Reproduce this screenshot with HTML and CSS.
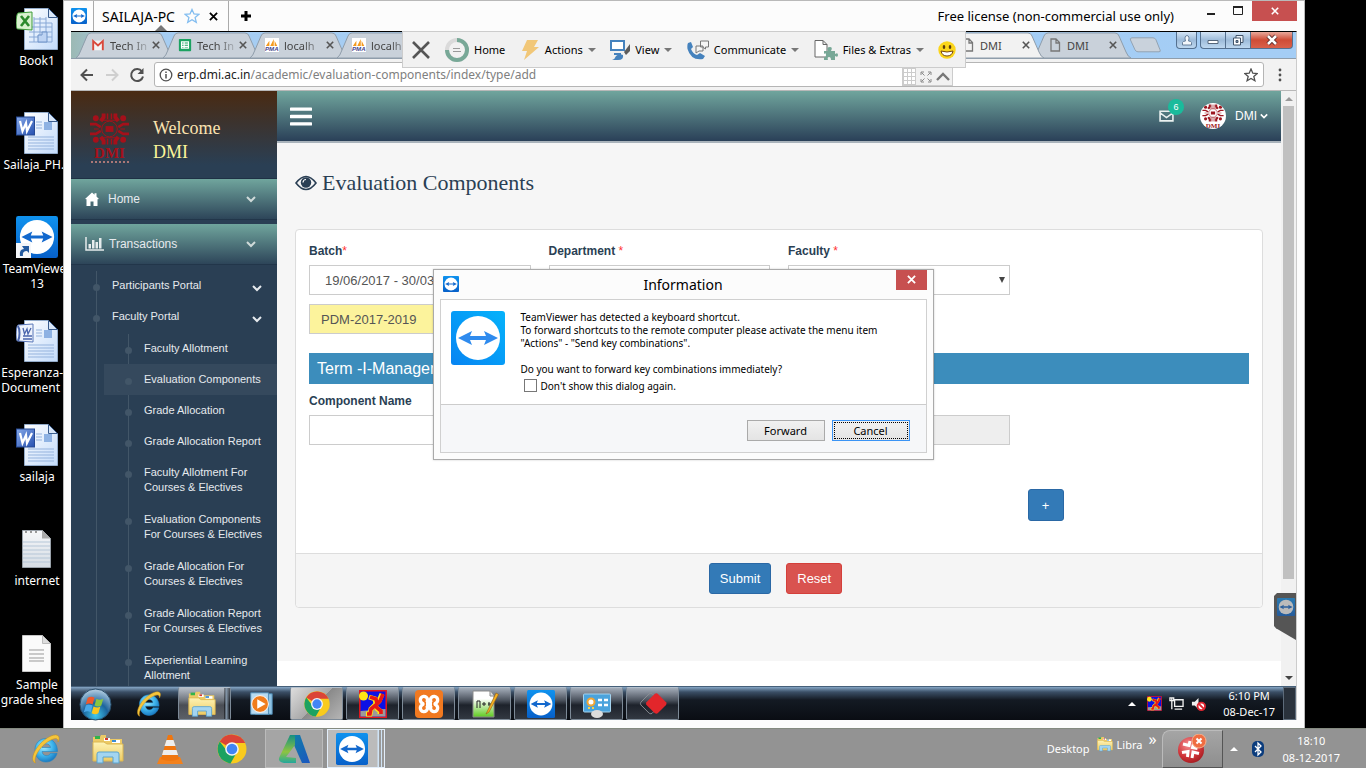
FILE: index.html
```html
<!DOCTYPE html>
<html lang="en">
<head>
<meta charset="utf-8">
<title>SAILAJA-PC - TeamViewer</title>
<link rel="stylesheet" href="styles.css">
</head>
<body>
<svg class="defs" aria-hidden="true">
  <defs>
    <linearGradient id="gTv" x1="0" y1="0" x2="0" y2="1"><stop offset="0" stop-color="#0f92ee"/><stop offset="1" stop-color="#0760c9"/></linearGradient>
    <linearGradient id="gTvBright" x1="1" y1="0" x2="0" y2="1"><stop offset="0" stop-color="#05b3fb"/><stop offset="1" stop-color="#0784f2"/></linearGradient>
    <linearGradient id="gPage" x1="0" y1="0" x2="1" y2="1"><stop offset="0" stop-color="#fff"/><stop offset="1" stop-color="#c3dbfa"/></linearGradient>
    <linearGradient id="gNote" x1="0" y1="0" x2="0" y2="1"><stop offset="0" stop-color="#f6f7f9"/><stop offset="1" stop-color="#d5dce4"/></linearGradient>
    <linearGradient id="gWord" x1="0" y1="0" x2="1" y2="1"><stop offset="0" stop-color="#86a9e8"/><stop offset="1" stop-color="#2650b0"/></linearGradient>
    <linearGradient id="gFolder" x1="0" y1="0" x2="0" y2="1"><stop offset="0" stop-color="#fdf3b5"/><stop offset="1" stop-color="#eecb62"/></linearGradient>
    <radialGradient id="gIe" cx=".4" cy=".35" r=".7"><stop offset="0" stop-color="#a5ecff"/><stop offset=".55" stop-color="#3fb5ec"/><stop offset="1" stop-color="#1573bd"/></radialGradient>
    <radialGradient id="gOrb" cx=".5" cy=".85" r=".8"><stop offset="0" stop-color="#3fc8ee"/><stop offset=".5" stop-color="#1c649c"/><stop offset="1" stop-color="#a9c6dc"/></radialGradient>
    <radialGradient id="gRed" cx=".4" cy=".3" r=".8"><stop offset="0" stop-color="#f58f92"/><stop offset=".6" stop-color="#cf3338"/><stop offset="1" stop-color="#98161b"/></radialGradient>
    <linearGradient id="gA" x1="0" y1="0" x2="0" y2="1"><stop offset="0" stop-color="#149083"/><stop offset=".6" stop-color="#8fc440"/><stop offset="1" stop-color="#24a79c"/></linearGradient>
    <linearGradient id="gA2" x1="0" y1="0" x2="1" y2="1"><stop offset="0" stop-color="#0f82a6"/><stop offset="1" stop-color="#1b56c0"/></linearGradient>
    <linearGradient id="gNpp" x1="0" y1="0" x2="0" y2="1"><stop offset=".3" stop-color="#fff"/><stop offset="1" stop-color="#5ecb1f"/></linearGradient>

    <symbol id="tv" viewBox="0 0 54 54"><rect width="54" height="54" rx="3" fill="url(#gTv)"/><circle cx="27" cy="27" r="22" fill="#fff"/><path d="M7 27l14-7-2 5h16l-2-5 14 7-14 7 2-5H19l2 5z" fill="#1268cd"/></symbol>
    <symbol id="tvBright" viewBox="0 0 54 54"><rect width="54" height="54" rx="3" fill="url(#gTvBright)"/><circle cx="27" cy="27" r="22" fill="#fff"/><path d="M7 27l14-7-2 5h16l-2-5 14 7-14 7 2-5H19l2 5z" fill="#2f8bee"/></symbol>
    <symbol id="page" viewBox="0 0 42 42"><path d="M8.500.500h24l9 9v32h-33z" fill="url(#gPage)" stroke="#93abc9"/><path d="M32.500.500v9h9z" fill="#d9e7f8" stroke="#3a5c8c"/></symbol>
    <symbol id="word" viewBox="0 0 42 42"><use href="#page"/><path d="M20 10h6M20 13h6M20 16h6M12 25h26M12 28h26M12 31h26M12 34h26M12 37h26" stroke="#95b3dd" stroke-width="1"/><path d="M28 10h8v8h-8z" fill="#8eb2e3"/><rect x=".5" y="5" width="18" height="18" fill="url(#gWord)" stroke="#274a94"/><path d="M4 9l2.500 10L10 11l1 8 5-10" fill="none" stroke="#fff" stroke-width="2.200"/></symbol>
    <symbol id="wordDoc" viewBox="0 0 42 42"><use href="#page"/><path d="M20 10h6M20 13h6M20 16h6M12 25h26M12 28h26M12 31h26M12 34h26M12 37h26" stroke="#95b3dd"/><path d="M28 10h8v8h-8z" fill="#8eb2e3"/><path d="M2 5l15-1v18l-15-1c-3 1-2-15 0-16z" fill="#eef3fc" stroke="#5b78b9"/><path d="M2 6c2 3 2 11 0 15" fill="none" stroke="#4a65ac" stroke-width="2"/><path d="M7 8l1.500 6L11 9l1 5 3-6M7 16h9M7 19h9" fill="none" stroke="#4a65ac" stroke-width="1.300"/></symbol>
    <symbol id="excel" viewBox="0 0 42 42"><use href="#page"/><path d="M13 19h23M13 24h23M13 29h23M13 34h23M18 9v25M24 9v25M30 9v25M36 15v19M18 11h12M18 15h18" stroke="#88a8d6" fill="none"/><path d="M22 34v-7h4v-3h5v10z" fill="#bdd3f3" stroke="#6d91c6"/><path d="M2 5l14-1v18l-14-1c-3 1-2-15 0-16z" fill="#d9f2cf" stroke="#3d9b39"/><path d="M5 8l8 10M13 8l-8 10" stroke="#2b8a2c" stroke-width="2.600"/></symbol>
    <symbol id="note" viewBox="0 0 42 42"><path d="M6.500 2.500h20l8 8v29h-28z" fill="url(#gNote)" stroke="#9aa2aa"/><path d="M7 14h27M7 18h27M7 22h27M7 26h27M7 30h27M7 34h27" stroke="#b5c6d7"/><path d="M26 2v8.500h8.500z" fill="#aaa"/><path d="M9 4h2M14 4h2M19 4h2" stroke="#999" stroke-width="2"/></symbol>
    <symbol id="sheet" viewBox="0 0 42 42"><path d="M6.500 3.500h20l8 8v28h-28z" fill="#fafafa" stroke="#c6c6c6"/><path d="M26.500 3.500v8h8z" fill="#ddd" stroke="#bbb"/><path d="M13 18h15M13 22h15M13 26h15M13 29h15" stroke="#999"/></symbol>
    <symbol id="ie" viewBox="0 0 32 32"><path d="M5 16.500C5 10 10 5.500 16 5.500S27.500 10 27.500 18.500H12c.5 5 7 5.500 8.500 1.800h6.600C25.500 26 21 29 16 29 9.500 29 5 24 5 16.500zM12 14.500h8.500c-.5-5-8-5-8.500 0z" fill="url(#gIe)" stroke="#2284c4" stroke-width=".6"/><path d="M5.500 30C-2 27 7 9 21 3c7-3 10 .500 7 6 0-4-2-4-6-2.500C11 11 2.500 25 5.500 30z" fill="#f5c53b" stroke="#c98e14" stroke-width=".5"/></symbol>
    <symbol id="folder" viewBox="0 0 32 32"><path d="M1 4h7l1-2h5v4h16v21H1z" fill="#ecca66"/><path d="M3 3h5v3H3z" fill="#31b44a"/><path d="M12 5h6v3h-6z" fill="#fff"/><path d="M13 5h3v2h-3z" fill="#d43c2f"/><path d="M20 7h8v3h-8z" fill="#fff"/><path d="M20 7h4v2h-4z" fill="#3a8dd6"/><path d="M1 9h11l3 2h16v17H1z" fill="url(#gFolder)" stroke="#dcb751"/><path d="M5 30V21q0-2 2-2h18q2 0 2 2v9h-6v-6H11v6z" fill="#a3d5f1" stroke="#5ba4cf"/></symbol>
    <symbol id="chrome" viewBox="0 0 32 32"><circle cx="16" cy="16" r="14.500" fill="#f9cb1d"/><path d="M16 16L3.700 8.500A14.500 14.500 0 0 1 29.200 10H16z" fill="#db4437"/><path d="M3.700 8.500A14.500 14.500 0 0 0 14.500 30.400L21 19l-10-1z" fill="#1ca261"/><circle cx="16" cy="16" r="6.800" fill="#f4f4f4"/><circle cx="16" cy="16" r="5.300" fill="#4285f4"/></symbol>
    <symbol id="dmi" viewBox="0 0 42 34"><g fill="none" stroke="currentColor"><circle cx="21" cy="17" r="8" stroke-width="1"/><path d="M14 8h14M14 26h14M10 17H5M37 17h-5" stroke-width="1"/><path d="M15 1v4l-3 4M27 1v4l3 4M15 33v-4l-3-4M27 33v-4l3-4" stroke-width="4"/><path d="M19 1v6M23 1v6M19 33v-6M23 33v-6" stroke-width="1.500"/><path d="M1 12h6l5 3M41 12h-6l-5 3M1 22h6l5-3M41 22h-6l-5-3" stroke-width="2.600"/></g><g fill="currentColor"><circle cx="7" cy="6" r="3"/><circle cx="35" cy="6" r="3"/><circle cx="7" cy="28" r="3"/><circle cx="35" cy="28" r="3"/><path d="M17 14h8v6h-8z"/></g></symbol>
    <symbol id="chev" viewBox="0 0 10 8"><path d="M1 2l4 4 4-4" fill="none" stroke="currentColor" stroke-width="2"/></symbol>
    <symbol id="cross" viewBox="0 0 10 10"><path d="M1 1l8 8M9 1L1 9" fill="none" stroke="currentColor" stroke-width="2"/></symbol>
    <symbol id="thinCross" viewBox="0 0 20 20"><path d="M2 2l16 16M18 2L2 18" fill="none" stroke="currentColor" stroke-width="2.600"/></symbol>
    <symbol id="doc" viewBox="0 0 10 14"><path d="M1 1h5l3.500 3.500V13H1zM6 1v4h3.500" fill="none" stroke="#777" stroke-width="1.300"/></symbol>
    <symbol id="pma" viewBox="0 0 16 16"><path d="M0 0h16v16H0z" fill="#fff"/><path d="M1 9l4-6v6zM6 9l4-8v8zM11 9V3l3 6z" fill="#f39a1e"/></symbol>
    <symbol id="man" viewBox="0 0 28 28"><path d="M.8.800h26.400v26.400H.800z" fill="#0b10e6" stroke="#e8151b" stroke-width="1.500"/><path d="M1.500 21l25-2v7.500h-25z" fill="#9b9b9b"/><circle cx="4.500" cy="6" r="4.500" fill="#ffe713"/><path d="M23 4l-3 7-5 5 6 5v3M10 7l6 2 1 5-5 5-1 5H7" fill="none" stroke="#ffe713" stroke-width="5"/><path d="M24 4l-3 7-5 5 6 5v3M11 7l6 2 1 5-6 5-1 5H8" fill="none" stroke="#e81717" stroke-width="3.600"/></symbol>
    <symbol id="tab" viewBox="0 0 98 26" preserveAspectRatio="none"><path d="M0 26Q3 24 5 18L11 4Q12 1 15 1H82Q85 1 86 4L93 20Q95 25 98 26z" fill="currentColor" stroke="#8f9dab"/></symbol>
  </defs>
</svg>

<main class="desktop">
  <nav class="shortcuts" aria-label="Desktop icons">
    <a href="#"><svg><use href="#excel"/></svg><span>Book1</span></a>
    <a href="#"><svg><use href="#word"/></svg><span>Sailaja_PH...</span></a>
    <a href="#"><svg><use href="#tv"/><path d="M0 27h15v15H0z" fill="#f4f6f9"/><path d="M4 40q-1-7 4-7l-2-3h7v7l-2-2q-5 0-4 5z" fill="#235a9f"/></svg><span>TeamViewer 13</span></a>
    <a href="#"><svg><use href="#wordDoc"/></svg><span>Esperanza-... Document ...</span></a>
    <a href="#"><svg><use href="#word"/></svg><span>sailaja</span></a>
    <a href="#"><svg><use href="#note"/></svg><span>internet</span></a>
    <a href="#"><svg><use href="#sheet"/></svg><span>Sample grade shee...</span></a>
  </nav>

  <section class="viewer">
    <header class="viewer-bar">
      <svg class="viewer-logo"><use href="#tv"/></svg>
      <div class="session"><span>SAILAJA-PC</span>
        <svg class="star" viewBox="0 0 16 16"><path d="M8 1.500l2 4.500 4.800.400-3.700 3.200 1.200 4.800L8 11.800l-4.300 2.600 1.200-4.800L1.200 6.400 6 6z" fill="none" stroke="#82bdf0" stroke-width="1.300"/></svg>
        <button class="bare" aria-label="Close session"><svg class="x8"><use href="#cross"/></svg></button>
        <i class="session-arrow"></i>
      </div>
      <button class="bare add" aria-label="New session"><svg viewBox="0 0 12 12"><path d="M6 1v10M1 6h10" stroke="#000" stroke-width="3"/></svg></button>
      <span class="license">Free license (non-commercial use only)</span>
      <div class="win-buttons">
        <button class="bare" aria-label="Minimize"><svg viewBox="0 0 12 12"><path d="M2 9h8" stroke="#222" stroke-width="2"/></svg></button>
        <button class="bare" aria-label="Maximize"><svg viewBox="0 0 12 12"><path d="M1.500 2.500h9v7h-9z" fill="none" stroke="#222"/><path d="M1 2h10" stroke="#222" stroke-width="2"/></svg></button>
        <button class="bare close" aria-label="Close"><svg class="x8"><use href="#cross"/></svg></button>
      </div>
    </header>

    <div class="remote">
      <div class="tabs">
        <div class="tab"><svg class="tab-shape"><use href="#tab"/></svg><svg class="fav" viewBox="0 0 16 16"><path d="M2 3h12v11H2z" fill="#f4f4f4"/><path d="M2.500 14V3.500L8 8.500l5.500-5V14" fill="none" stroke="#d9483b" stroke-width="2.200"/></svg><span class="fade">Tech In</span><button class="bare" aria-label="Close tab"><svg class="x8"><use href="#cross"/></svg></button></div>
        <div class="tab"><svg class="tab-shape"><use href="#tab"/></svg><svg class="fav" viewBox="0 0 16 16"><rect x="1" y="1" width="14" height="14" rx="1" fill="#1ca261"/><path d="M4 4.500h8v7H4zM4 7h8M4 9.500h8M7 4.500v7" fill="none" stroke="#fff" stroke-width="1.300"/></svg><span class="fade">Tech In</span><button class="bare" aria-label="Close tab"><svg class="x8"><use href="#cross"/></svg></button></div>
        <div class="tab"><svg class="tab-shape"><use href="#tab"/></svg><svg class="fav" viewBox="0 0 16 16"><use href="#pma"/><text class="pma" x="0" y="15">PMA</text></svg><span class="fade">localh</span><button class="bare" aria-label="Close tab"><svg class="x8"><use href="#cross"/></svg></button></div>
        <div class="tab"><svg class="tab-shape"><use href="#tab"/></svg><svg class="fav" viewBox="0 0 16 16"><use href="#pma"/><text class="pma" x="0" y="15">PMA</text></svg><span class="fade">localh</span></div>
        <div class="tab tab-right active"><svg class="tab-shape"><use href="#tab"/></svg><svg class="fav"><use href="#doc"/></svg><span>DMI</span><button class="bare" aria-label="Close tab"><svg class="x8"><use href="#cross"/></svg></button></div>
        <div class="tab"><svg class="tab-shape"><use href="#tab"/></svg><svg class="fav"><use href="#doc"/></svg><span>DMI</span><button class="bare" aria-label="Close tab"><svg class="x8"><use href="#cross"/></svg></button></div>
        <button class="bare new-tab" aria-label="New tab"><svg viewBox="0 0 32 16"><path d="M3 .800h21q2 0 3 2l4 10q1 2-1 2H9q-2 0-3-2L1.500 3q-1-2 1.500-2.200z" fill="#c9d2dc" stroke="#93a3b3"/></svg></button>
        <div class="aero">
          <button aria-label="Profile"><svg viewBox="0 0 12 12"><path d="M1.500 11V8.500Q2 7 4.500 7 3 2 6 1.500 9 2 7.500 7 10 7 10.500 8.500V11z" fill="#f4f7fb" stroke="#68809b"/></svg></button>
          <div class="aero-group">
            <button aria-label="Minimize"><svg viewBox="0 0 12 12"><path d="M1 6.500h10v3H1z" fill="#fff" stroke="#55667a"/></svg></button>
            <button aria-label="Restore"><svg viewBox="0 0 12 12"><path d="M4 1.500h7v7H4z" fill="#eef3f9" stroke="#44566b"/><path d="M1.500 4h7v7h-7z" fill="#fff" stroke="#44566b"/><path d="M4 6.500h2v2H4z" fill="#7f99b5" stroke="#44566b"/></svg></button>
            <button class="aero-close" aria-label="Close"><svg viewBox="0 0 12 12"><path d="M2 2l8 8M10 2l-8 8" stroke="#5c2b2b" stroke-width="4.400"/><path d="M2 2l8 8M10 2l-8 8" stroke="#fff" stroke-width="2.600"/></svg></button>
          </div>
        </div>
      </div>

      <div class="address-row">
        <button class="bare" aria-label="Back"><svg viewBox="0 0 16 16"><path d="M14 8H3M8 2.500L2.500 8 8 13.500" fill="none" stroke="#505050" stroke-width="2"/></svg></button>
        <button class="bare" aria-label="Forward"><svg viewBox="0 0 16 16"><path d="M2 8h11M8 2.500L13.500 8 8 13.500" fill="none" stroke="#cfcfcf" stroke-width="2"/></svg></button>
        <button class="bare" aria-label="Reload"><svg viewBox="0 0 16 16"><path d="M13 4.500A6 6 0 1 0 14 9.500" fill="none" stroke="#505050" stroke-width="2"/><path d="M14.500 1v6h-6z" fill="#505050"/></svg></button>
        <div class="omnibox">
          <svg viewBox="0 0 14 14"><circle cx="7" cy="7" r="5.800" fill="none" stroke="#505050" stroke-width="1.300"/><path d="M7 6v4.500M7 3.500V5" stroke="#505050" stroke-width="1.500"/></svg>
          <a href="#"><b>erp.dmi.ac.in</b>/academic/evaluation-components/index/type/add</a>
          <svg viewBox="0 0 14 14"><path d="M7 1l1.800 4.200 4.400.300-3.400 2.900 1.100 4.300L7 10.400l-3.900 2.300 1.100-4.300L.8 5.500l4.400-.300z" fill="none" stroke="#505050" stroke-width="1.300"/></svg>
        </div>
        <button class="bare menu" aria-label="Menu"><svg viewBox="0 0 4 14"><circle cx="2" cy="2" r="1.400"/><circle cx="2" cy="7" r="1.400"/><circle cx="2" cy="12" r="1.400"/></svg></button>
      </div>

      <div class="page">
        <aside class="sidebar">
          <div class="brand">
            <div class="brand-logo"><svg><use href="#dmi"/></svg><b>DMI</b><i></i></div>
            <p>Welcome<br><span>DMI</span></p>
          </div>
          <a class="section" href="#"><svg class="sec-icon" viewBox="0 0 14 14"><path d="M0 7l7-6.500 2.500 2.200V1.200h2v3.300L14 7l-1.500.300V14H8.500V9.500h-3V14H1.500V7.300z" fill="#fff"/></svg><span>Home</span><svg class="chev"><use href="#chev"/></svg></a>
          <a class="section" href="#"><svg class="sec-icon wide" viewBox="0 0 19 14"><path d="M1 0v13h18" fill="none" stroke="#e6ecec" stroke-width="1.500"/><path d="M3.500 11.500V7h2.500v4.500zM7 11.500V3h2.500v8.500zM10.500 11.500V5H13v6.500zM14 11.500V1h2.500v10.500z" fill="#e6ecec"/></svg><span>Transactions</span><svg class="chev"><use href="#chev"/></svg></a>
          <ul class="tree">
            <li><a href="#">Participants Portal<svg class="chev"><use href="#chev"/></svg></a></li>
            <li><a href="#">Faculty Portal<svg class="chev"><use href="#chev"/></svg></a>
              <ul class="leaves">
                <li><a href="#">Faculty Allotment</a></li>
                <li class="current"><a href="#">Evaluation Components</a></li>
                <li><a href="#">Grade Allocation</a></li>
                <li><a href="#">Grade Allocation Report</a></li>
                <li class="tall"><a href="#">Faculty Allotment For<br>Courses &amp; Electives</a></li>
                <li class="tall"><a href="#">Evaluation Components<br>For Courses &amp; Electives</a></li>
                <li class="tall"><a href="#">Grade Allocation For<br>Courses &amp; Electives</a></li>
                <li class="tall"><a href="#">Grade Allocation Report<br>For Courses &amp; Electives</a></li>
                <li class="tall"><a href="#">Experiential Learning<br>Allotment</a></li>
              </ul>
            </li>
          </ul>
        </aside>

        <div class="content">
          <header class="topnav">
            <button class="bare burger" aria-label="Toggle menu"><svg viewBox="0 0 21 18"><path d="M1 2h19M1 9h19M1 16h19" stroke="#fff" stroke-width="3.200" stroke-linecap="round"/></svg></button>
            <a class="mail" href="#" aria-label="Messages"><svg viewBox="0 0 14 11"><path d="M1 1h12v9H1zM1 2.500l6 4.500 6-4.500" fill="none" stroke="#eaf1f0" stroke-width="1.500"/></svg><span class="badge">6</span></a>
            <a class="user" href="#"><span class="avatar"><svg><use href="#dmi"/></svg><b>DMI</b></span>DMI<svg class="chev"><use href="#chev"/></svg></a>
          </header>
          <form class="workspace">
            <h1><svg viewBox="0 0 22 16"><path d="M1 8Q11-5 21 8 11 21 1 8z" fill="none" stroke="#2a3f54" stroke-width="1.600"/><circle cx="11" cy="7.500" r="5.200" fill="#2a3f54"/><path d="M8 7.500a3 3 0 0 1 3-3" fill="none" stroke="#fff" stroke-width="1.200"/></svg>Evaluation Components</h1>
            <div class="panel">
              <div class="panel-body">
                <div class="fields">
                  <div class="field"><label for="batch">Batch<em>*</em></label><select id="batch"><option>19/06/2017 - 30/03/2019</option></select></div>
                  <div class="field"><label for="dept">Department <em>*</em></label><select id="dept"><option></option></select></div>
                  <div class="field drop"><label for="faculty">Faculty <em>*</em></label><select id="faculty"><option></option></select></div>
                </div>
                <div class="fields course"><input class="batch-name" type="text" value="PDM-2017-2019" aria-label="Batch name" readonly></div>
                <h2>Term -I-Management</h2>
                <div class="fields">
                  <div class="field"><label for="comp">Component Name</label><input id="comp" type="text"></div>
                  <div class="field"></div>
                  <div class="field bottom"><input type="text" aria-label="Total" disabled></div>
                </div>
                <div class="fields add-row"><button type="button" class="btn plus">+</button></div>
              </div>
              <div class="panel-foot"><button type="button" class="btn">Submit</button><button type="reset" class="btn danger">Reset</button></div>
            </div>
          </form>
        </div>
        <div class="scrollbar"><i class="up"></i><div class="thumb"></div><i class="down"></i></div>
      </div>

      <footer class="remote-bar">
        <button class="app plain" aria-label="Start"><svg viewBox="0 0 34 34"><circle cx="17" cy="17" r="16" fill="url(#gOrb)" stroke="#284c69"/><path d="M9 10q4-2 7 0l-2 7q-3-2-7 0z" fill="#f0592b"/><path d="M18 11q3 2 7 0l-2 7q-3 2-7 0z" fill="#8ac63f"/><path d="M7 18q3-2 7 0l-2 7q-3-2-7 0z" fill="#49a9e8"/><path d="M15 19q4 2 7 0l-2 7q-3 2-7 0z" fill="#fbc61e"/></svg></button>
        <button class="app plain" aria-label="Internet Explorer"><svg><use href="#ie"/></svg></button>
        <button class="app stacked" aria-label="Explorer"><svg><use href="#folder"/></svg></button>
        <button class="app plain" aria-label="Media Player"><svg viewBox="0 0 30 30"><path d="M9 4h18v22H9z" fill="#8fc3e4" stroke="#4b86ae"/><path d="M4 3h19v23H4z" fill="#b7dbf1" stroke="#4f8bb4"/><circle cx="14" cy="15" r="9" fill="#f07c1c" stroke="#fff"/><path d="M11 10l9 5-9 5z" fill="#fff"/></svg></button>
        <button class="app lit" aria-label="Chrome"><svg><use href="#chrome"/></svg></button>
        <button class="app" aria-label="Attendance"><svg><use href="#man"/></svg></button>
        <button class="app" aria-label="XAMPP"><svg viewBox="0 0 28 28"><rect width="28" height="28" rx="4" fill="#f17920"/><g fill="none" stroke="#fff" stroke-width="3.400"><path d="M11.500 12.500A3.600 3.600 0 1 0 7 13q2 1 0 2a3.600 3.600 0 1 0 4.500.500M16.500 12.500A3.600 3.600 0 1 1 21 13q-2 1 0 2a3.600 3.600 0 1 1-4.500.500M11 14h6M12 10.500q2 1.500 4 0M12 17.500q2-1.500 4 0"/></g></svg></button>
        <button class="app" aria-label="Notepad++"><svg viewBox="0 0 28 28"><path d="M2 1h17l4 5v21H2z" fill="url(#gNpp)" stroke="#8b8b8b"/><path d="M19 1v5h4" fill="#ddd" stroke="#888"/><path d="M6 18v-7h3v7M11 14h4M17 14h3M13 12v4M18 12v4" fill="none" stroke="#222"/><path d="M16 22L25 3l2.500 1.500L18 22l-3 2z" fill="#f5b021" stroke="#8f5b12" stroke-width=".6"/></svg></button>
        <button class="app" aria-label="TeamViewer"><svg><use href="#tv"/></svg></button>
        <button class="app" aria-label="Control Panel"><svg viewBox="0 0 28 28"><rect x=".5" y="4" width="27" height="18" rx="1" fill="#4ba3dc" stroke="#a5d3ee"/><circle cx="8" cy="12" r="3.500" fill="#fff" stroke="#f2a534" stroke-width="2"/><path d="M15 10h4M21 10h4M15 15h4M21 15h4" stroke="#fff" stroke-width="2.500"/><path d="M5 18h2M9 18h2" stroke="#f7d24c" stroke-width="2"/><ellipse cx="14" cy="24" rx="6" ry="4" fill="#dcdcdc"/></svg></button>
        <button class="app" aria-label="AnyDesk"><svg viewBox="0 0 30 30"><path d="M2 13l9-9q2-1 3 0l9 9q1 1 0 3l-9 9q-1 1-3 0l-9-9q-1-1 0-3z" fill="none" stroke="#8b8f94"/><path d="M8 13l9-9q2-1 3 0l9 9q1 1 0 3l-9 9q-1 1-3 0l-9-9q-1-1 0-3z" fill="#e2262b"/></svg></button>
        <div class="tray">
          <i class="tray-up"></i>
          <svg><use href="#man"/></svg>
          <svg viewBox="0 0 16 16"><path d="M6 4h9v7H6zM3 2v12M1 2h4v3H1zM6 14h8" fill="none" stroke="#f2f2f2" stroke-width="1.400"/></svg>
          <svg viewBox="0 0 16 16"><path d="M1 6h3l4-4v12l-4-4H1z" fill="#eee"/><circle cx="11" cy="11" r="4" fill="#fff" stroke="#df2530" stroke-width="2"/><path d="M8 8l6 6" stroke="#df2530" stroke-width="2"/></svg>
          <time>6:10 PM<br>08-Dec-17</time>
        </div>
        <div class="peek"></div>
      </footer>

      <div class="tv-tools">
        <div class="tv-main">
          <button class="bare" aria-label="Close"><svg class="i20"><use href="#thinCross"/></svg></button>
          <button class="bare"><svg class="i24" viewBox="0 0 24 24"><circle cx="12" cy="12" r="10" fill="none" stroke="#dadada" stroke-width="4"/><path d="M12 2a10 10 0 1 1-10 10" fill="none" stroke="#78a897" stroke-width="4"/><path d="M8 10.500h7M8 13.500h8" stroke="#999"/></svg>Home</button>
          <button class="bare"><svg class="i20" viewBox="0 0 20 20"><path d="M7 0h11l-4 7h5L4 20l3-9H2z" fill="#f1c778"/></svg>Actions<i></i></button>
          <button class="bare"><svg class="i20" viewBox="0 0 20 20"><path d="M1 1h13v9H1z" fill="#fff" stroke="#4582bd" stroke-width="2"/><path d="M4 13h7v2H4zM2 20q3-1 4-4 3-3 7-1 1 5-5 5z" fill="#4582bd"/><path d="M20 4v7l-4 4-2-3z" fill="#5c5c5c"/></svg>View<i></i></button>
          <button class="bare"><svg class="i22" viewBox="0 0 22 20"><path d="M1 3l3-1 2 5-2 2q2 5 6 6l3-2 5 3-2 3Q4 21 .500 9q-.500-4 .500-6z" fill="#4582bd"/><path d="M13.500 1h8v6h-3v2l-3-2h-2zM9 6h7v5h-4l-3 2z" fill="#f5f5f5" stroke="#777"/></svg>Communicate<i></i></button>
          <button class="bare"><svg class="i24" viewBox="0 0 24 20"><path d="M1 .500h8l4 4V17H1zM9 .500v4h4" fill="#fff" stroke="#666"/><path d="M10 11h4q-2-4 2-4 3 0 1 4h4v3q3-2 3 1t-3 1v4h-4q0-3-2-3t-1 3h-4v-3q2 1 2-2t-2-1z" fill="#78a897"/></svg>Files &amp; Extras<i></i></button>
          <svg class="smile" viewBox="0 0 18 18"><circle cx="9" cy="9" r="8.700" fill="#fbd51b"/><ellipse cx="6" cy="6" rx="1.300" ry="2" fill="#5b3b10"/><ellipse cx="12" cy="6" rx="1.300" ry="2" fill="#5b3b10"/><path d="M3 10q6 2 12 0-1 5-6 5t-6-5z" fill="#fff" stroke="#76480f"/></svg>
        </div>
        <div class="tv-sub"><span class="grip"></span>
          <svg viewBox="0 0 12 12"><path d="M1 4V1h3M8 1h3v3M11 8v3H8M4 11H1V8M1.500 1.500l3 3M10.500 1.500l-3 3M10.500 10.500l-3-3M1.500 10.500l3-3" fill="none" stroke="#8a8a8a"/></svg>
          <svg class="up-arrow" viewBox="0 0 14 10"><path d="M1 8l6-6 6 6" fill="none" stroke="#777" stroke-width="2.400"/></svg></div>
      </div>
      <div class="side-flap"><svg><use href="#tv"/></svg></div>
    </div>
  </section>

  <dialog class="info" open aria-labelledby="infoTitle">
    <header><svg><use href="#tv"/></svg><h3 id="infoTitle">Information</h3><button class="bare close" aria-label="Close"><svg class="x8"><use href="#cross"/></svg></button></header>
    <div class="info-box">
      <div class="info-body"><svg><use href="#tvBright"/></svg>
        <div><p>TeamViewer has detected a keyboard shortcut.<br>To forward shortcuts to the remote computer please activate the menu item<br>"Actions" - "Send key combinations".</p><p>Do you want to forward key combinations immediately?</p>
        <label><input type="checkbox">Don't show this dialog again.</label></div></div>
      <div class="info-foot"><button>Forward</button><button class="focus"><span>Cancel</span></button></div>
    </div>
  </dialog>
</main>

<footer class="host-bar">
  <button class="app" aria-label="Internet Explorer"><svg><use href="#ie"/></svg></button>
  <button class="app" aria-label="Explorer"><svg><use href="#folder"/></svg></button>
  <button class="app" aria-label="VLC"><svg viewBox="0 0 30 32"><path d="M5 24h20l3 7H2z" fill="#f3811c"/><path d="M13 2h4l7 24q-9 4-18 0z" fill="#f0760f"/><path d="M11.500 7h7l2 6h-11zM8.500 17h13l1.600 5H7z" fill="#eee"/></svg></button>
  <button class="app" aria-label="Chrome"><svg><use href="#chrome"/></svg></button>
  <button class="app open" aria-label="Autodesk"><svg viewBox="0 0 32 32"><path d="M12 2h10l10 28h-8L16 12z" fill="url(#gA2)"/><path d="M12 2h5v10L8 24l10 1v5H6q-6-1-5-5z" fill="url(#gA)"/></svg></button>
  <button class="app open current-app" aria-label="TeamViewer"><svg><use href="#tv"/></svg></button>
  <div class="host-tray">
    <a href="#">Desktop</a>
    <a class="libra" href="#"><svg><use href="#folder"/></svg><span>Libra</span></a>
    <span class="more">»</span>
    <button class="notice" aria-label="Notifications"><svg viewBox="0 0 30 30"><circle cx="14" cy="16" r="13" fill="url(#gRed)"/><path d="M6 10l6 1.500L13 7M17 8l-1.500 5.500 5 1M5 18.500l6-1-.500 5.500M15 24l1-6 6 1.500" fill="none" stroke="#fff" stroke-width="3"/><circle cx="22" cy="7" r="7" fill="#ef6d42" stroke="#f6b18e"/><path d="M19.500 4.500l5 5M24.500 4.500l-5 5" stroke="#fff" stroke-width="2"/></svg></button>
    <i class="tray-up"></i>
    <svg class="bt" viewBox="0 0 12 16"><rect width="12" height="16" rx="5" fill="#0b3c7d"/><path d="M3 5l6 6-3 3V2l3 3-6 6" fill="none" stroke="#fff" stroke-width="1.300"/></svg>
    <time>18:10<br>08-12-2017</time>
  </div>
</footer>
</body>
</html>
```
FILE: styles.css
```css
* { box-sizing: border-box; }
body { margin: 0; min-height: 100vh; display: flex; flex-direction: column; background: #000; overflow: hidden; font-family: "Noto Sans", "Open Sans", sans-serif; font-size: 12px; color: #000; }
a { color: inherit; text-decoration: none; }
button, input, select { font: inherit; }
svg { flex: none; }
.defs { position: absolute; width: 0; height: 0; }
.bare { border: 0; padding: 0; background: none; color: inherit; display: flex; align-items: center; justify-content: center; }
.x8 { width: 9px; height: 9px; }
.i20 { width: 20px; height: 20px; }
.i22 { width: 22px; height: 20px; }
.i24 { width: 24px; height: 24px; }
.chev { width: 10px; height: 8px; }

/* Local desktop */
.desktop { position: relative; flex: 1; }
.shortcuts { display: grid; grid-auto-rows: 104px; width: 74px; padding-top: 8px; height: calc(100vh - 40px); overflow: hidden; }
.shortcuts a { display: flex; flex-direction: column; align-items: center; gap: 3px; color: #fff; font-size: 12px; line-height: 15px; text-align: center; }
.shortcuts svg { width: 42px; height: 42px; }

/* Viewer window */
.viewer { position: absolute; top: 0; right: 61px; bottom: 0; left: 63px; display: flex; flex-direction: column; background: #fcfcfc; border: 1px solid #b9b9b9; border-bottom: 0; padding: 0 7px 8px; }
.viewer-bar { display: flex; height: 30px; align-items: stretch; flex: none; }
.viewer-logo { width: 16px; height: 16px; align-self: center; }
.session { position: relative; display: flex; align-items: center; gap: 9px; width: 136px; margin-left: 6px; padding-left: 8px; border: solid #aaa; border-width: 0 1px; font-size: 14px; }
.star { width: 16px; height: 16px; }
.session-arrow { position: absolute; left: 61px; bottom: 0; border: 6px solid transparent; border-top: 0; border-bottom-color: #777; }
.add { width: 34px; }
.add svg { width: 12px; height: 12px; }
.license { margin-left: auto; align-self: center; font-size: 13px; }
.win-buttons { display: flex; gap: 2px; height: 20px; margin-left: 24px; }
.win-buttons button { width: 25px; }
.win-buttons svg { width: 12px; height: 12px; }
.close { background: #c75050; color: #fff; }
.win-buttons .close { width: 45px; }
.win-buttons .close svg { width: 8px; height: 8px; }
.remote { position: relative; flex: 1; min-height: 0; display: flex; flex-direction: column; border-top: 1px solid #000; border-right: 1px solid #ccc; background: #fff; }

/* Browser tabs */
.tabs { display: flex; height: 27px; flex: none; padding-left: 5px; background: linear-gradient(90deg, #9cb9b4, #a6cdf2 60px, #a4cdf5); border-bottom: 1px solid #8f9dab; }
.tab { position: relative; display: flex; align-items: center; gap: 4px; width: 98px; margin-right: -11px; padding-left: 14px; font-size: 11px; color: #444; }
.tab > * { position: relative; }
.tab .tab-shape { position: absolute; left: 0; top: 0; width: 98px; height: 26px; color: #c9d1da; }
.tab span { width: 38px; white-space: nowrap; }
.tab .fade { -webkit-mask-image: linear-gradient(90deg, #000 50%, #0003); mask-image: linear-gradient(90deg, #000 50%, #0003); }
.tab .x8 { width: 8px; height: 8px; color: #555; }
.fav { width: 16px; height: 14px; }
.pma { font: italic bold 7px "Liberation Sans", sans-serif; fill: #44458d; }
.tab-right { margin-left: auto; }
.active { z-index: 1; }
.tab.active .tab-shape { color: #f2f2f2; }
.new-tab { width: 32px; margin-left: 9px; }
.new-tab svg { width: 32px; height: 16px; }
.aero { display: flex; gap: 3px; height: 17px; margin: 0 3px 0 15px; }
.aero button { width: 21px; padding: 0; border: 1px solid #54708f; border-top: 0; border-radius: 0 0 4px 4px; background: linear-gradient(#d4e5f6, #9dbbd9 50%, #bed8f0); }
.aero svg { display: block; width: 12px; height: 12px; margin: auto; }
.aero-group { display: flex; }
.aero-group button { width: 25px; border-radius: 0 0 0 4px; border-right: 0; }
.aero-group button + button { border-radius: 0; }
.aero-group .aero-close { width: 43px; border-right: 1px solid #54708f; border-radius: 0 0 4px 0; background: linear-gradient(#e8a99c, #cf4c36 50%, #d9604a); }

/* Address row */
.address-row { display: flex; align-items: center; gap: 9px; height: 32px; flex: none; padding: 0 14px 0 8px; background: #f2f2f2; border-bottom: 1px solid #b8b8b8; }
.address-row .bare svg { width: 16px; height: 16px; }
.omnibox { flex: 1; display: flex; align-items: center; gap: 4px; height: 25px; padding: 0 5px 0 4px; background: #fff; border: 1px solid #b5b5b5; border-radius: 3px; color: #808080; font-size: 12px; }
.omnibox svg { width: 14px; height: 14px; }
.omnibox a { flex: 1; }
.omnibox b { color: #222; font-weight: 400; }
.address-row .menu svg { width: 4px; height: 14px; fill: #505050; }
.address-row .menu { margin-left: 5px; }

/* Web page */
.page { flex: 1; min-height: 0; display: flex; overflow: hidden; font-family: "Liberation Sans", Arial, sans-serif; }
.sidebar { width: 206px; flex: none; background: #2a3f54; color: #e6eaee; font-size: 12px; overflow: hidden; }
.brand { display: flex; gap: 23px; height: 88px; padding: 21px 0 0 18px; background: linear-gradient(#492a12, #2a3f54 85%); border-bottom: 1px solid #1f3145; }
.brand-logo { color: #a5101a; width: 41px; display: flex; flex-direction: column; align-items: center; }
.brand-logo svg { width: 41px; height: 34px; }
.brand-logo b { font: bold 15px/15px "Liberation Serif", serif; }
.brand-logo i { width: 38px; border-top: 2px dotted #a77; }
.brand p { margin: 4px 0 0; color: #fbe3b0; font: 18px/24px "Liberation Serif", serif; }
.brand span { color: #fcf59a; }
.section { display: flex; align-items: center; height: 41px; margin-bottom: 4px; padding: 0 21px 0 14px; background: linear-gradient(#70a59d, #2d4559); border-bottom: 1px solid #22364a; }
.section .sec-icon { width: 14px; height: 14px; margin-right: 9px; }
.section .wide { width: 19px; margin-right: 5px; }
.section .chev { margin-left: auto; color: #cfdad9; }
.tree, .leaves { margin: 0; padding: 0; list-style: none; font-size: 11px; line-height: 15px; }
.tree { position: relative; padding-top: 1px; }
.tree a { display: flex; padding: 8px 15px 8px 41px; }
.tree a .chev { margin: 6px 0 0 auto; }
.tree li { position: relative; }
.tree::before, .leaves::before { content: ""; position: absolute; left: 25px; top: 2px; bottom: -40px; border-left: 1px solid #425668; }
.tree li::before { content: ""; position: absolute; z-index: 1; left: 22px; top: 14px; width: 7px; height: 7px; border-radius: 50%; background: #425668; }
.leaves { position: relative; margin-left: 33px; padding-top: 1px; }
.leaves::before { left: 24px; }
.leaves li::before { left: 21px; }
.leaves a { padding: 8px 0 8px 40px; }
.leaves .tall a { padding-bottom: 9px; }
.current { background: #35495d; }
.content { flex: 1; min-width: 0; display: flex; flex-direction: column; background: #fff; }
.topnav { display: flex; align-items: center; height: 52px; flex: none; padding: 0 13px; background: linear-gradient(#70a59d, #2a4058); border-bottom: 2px solid #a9b3bb; color: #fff; }
.burger { margin-right: auto; }
.burger svg { width: 22px; height: 19px; }
.mail { position: relative; margin-right: 26px; }
.mail svg { display: block; width: 15px; height: 12px; }
.badge { position: absolute; left: 9px; bottom: 7px; width: 16px; height: 16px; border-radius: 50%; background: #1abb9c; font-size: 9px; line-height: 16px; text-align: center; }
.user { display: flex; align-items: center; font-size: 12px; }
.avatar { width: 26px; height: 26px; margin-right: 9px; border-radius: 50%; overflow: hidden; background: #fff; color: #9d1720; text-align: center; }
.avatar svg { display: block; width: 24px; height: 18px; margin: 1px; }
.avatar b { display: block; font: bold 7px/6px "Liberation Serif", serif; }
.user .chev { margin-left: 3px; width: 8px; }
.workspace { padding: 27px 18px 53px; background: #f6f6f6; color: #2a3f54; }
h1 { display: flex; align-items: center; gap: 5px; margin: 0 0 34px; font: 22px/25px "Liberation Serif", serif; }
h1 svg { width: 22px; height: 16px; }
.panel { background: #fff; border: 1px solid #ddd; border-radius: 4px; }
.panel-body { padding: 13px 13px 32px; }
.fields { display: grid; grid-template-columns: repeat(4, 1fr); gap: 18px; }
.field { display: flex; flex-direction: column; gap: 6px; }
.bottom { justify-content: flex-end; }
label { font-weight: 700; font-size: 12px; line-height: 16px; }
em { color: #f33; font-style: normal; font-weight: 400; }
.panel select, .panel input { width: 100%; height: 30px; padding: 0 15px; border: 1px solid #ccc; border-radius: 0; background: #fff; color: #555; font-size: 13px; appearance: none; }
.panel input:disabled { background: #eee; }
.drop { position: relative; }
.drop::after { content: ""; position: absolute; right: 5px; bottom: 12px; border: 3px solid transparent; border-top: 6px solid #444; border-bottom: 0; }
.course { margin-top: 9px; }
.panel .batch-name { background: #fcf39c; padding: 0 11px; }
h2 { margin: 19px 0 9px; padding: 0 8px; background: #3c8dbc; color: #fff; font-size: 16px; line-height: 31px; font-weight: 400; }
.add-row { margin-top: 44px; }
.btn { height: 31px; padding: 0 10px; border: 1px solid #2a68a5; border-radius: 3px; background: #337ab7; color: #fff; font-size: 13px; }
.plus { grid-column: 4; justify-self: start; width: 36px; height: 32px; }
.danger { background: #d9534f; border-color: #d43f3a; }
.panel-foot { display: flex; justify-content: center; gap: 15px; height: 54px; padding: 9px 7px 0 0; border-top: 1px solid #ddd; background: #f5f5f5; border-radius: 0 0 4px 4px; }
.scrollbar { width: 15px; display: flex; flex-direction: column; align-items: center; background: #f1f1f1; padding: 6px 0; }
.thumb { width: 11px; margin: 5px 0 97px; flex: 1; background: #c0c0c0; }
.up { border: 4px solid transparent; border-top: 0; border-bottom-color: #999; }
.down { border: 4px solid transparent; border-bottom: 0; border-top-color: #444; }

/* Remote taskbar */
.remote-bar { display: flex; gap: 3px; height: 34px; flex: none; color: #fff; background: linear-gradient(#86a7c6, #3b4f66 5px, #141a23 13px, #0a0d13); border-top: 1px solid #46607a; font-size: 11px; }
.remote-bar .app { width: 53px; padding: 0; border: 1px solid #7d8a97; border-top-color: #b3c0cd; border-radius: 2px; background: linear-gradient(#a4adb9, #4a515c 40%, #1d222b 55%, #323841); }
.remote-bar .plain { border-color: transparent; background: none; }
.remote-bar .stacked { padding-right: 5px; background: linear-gradient(90deg, #fff3 88%, #0008 90%, #8ca0b4 92%, #0008), linear-gradient(#a4adb9, #4a515c 40%, #1d222b 55%, #323841); }
.remote-bar .lit { background: linear-gradient(135deg, #ddd, #aaa 50%, #8a8a8a 51%, #b5b5b5); }
.app svg { display: block; width: 28px; height: 28px; margin: auto; }
.remote-bar .app:first-child { width: 48px; }
.remote-bar .app:first-child svg { width: 33px; height: 33px; }
.tray { display: flex; align-items: center; gap: 7px; margin-left: auto; }
.tray svg { width: 15px; height: 15px; }
.tray-up { border: 4px solid transparent; border-top: 0; border-bottom-color: #fff; margin-right: 4px; }
time { line-height: 16px; text-align: center; }
.tray time { margin-left: 10px; }
.peek { width: 13px; margin-left: 5px; border: 1px solid #5d6b7a; background: #2a323c; }

/* Viewer toolbar */
.tv-tools { position: absolute; z-index: 2; top: -1px; left: 50%; width: 564px; margin-left: -282px; display: flex; flex-direction: column; align-items: flex-end; }
.tv-main { display: flex; align-items: center; justify-content: space-between; align-self: stretch; height: 37px; padding: 0 8px; background: #f1f1f1; border: 1px solid #ccc; font-size: 12px; }
.tv-main .bare { gap: 5px; white-space: nowrap; font-size: 11px; }
.tv-main .bare:first-child { color: #555; }
.tv-main i { border: 4px solid transparent; border-top-color: #777; border-bottom: 0; }
.smile { width: 18px; height: 18px; }
.tv-sub { display: flex; align-items: center; gap: 4px; width: 51px; height: 18px; margin-right: 13px; background: #f1f1f1; border: 1px solid #ccc; border-top: 0; }
.tv-sub svg { width: 12px; height: 12px; }
.tv-sub .up-arrow { width: 14px; height: 10px; }
.grip { align-self: stretch; width: 13px; flex: none; background: linear-gradient(90deg, #ccc 1px, transparent 1px) 0 0 / 4px 4px, linear-gradient(#ccc 1px, #fff 1px) 0 0 / 4px 4px; }
.side-flap { position: absolute; z-index: 2; right: 0; bottom: 80px; width: 22px; height: 47px; padding: 5px 0 0 3px; background: #555; clip-path: polygon(3px 0, 100% 0, 100% 100%, 2px 75%, 0 70%, 0 3px); }
.side-flap svg { display: block; width: 18px; height: 18px; opacity: .6; }

/* Dialog */
.info { position: absolute; inset: 0; z-index: 5; width: 501px; height: fit-content; margin: auto; padding: 0 6px 6px; border: 1px solid #aaa; background: #fcfcfc; color: #000; box-shadow: 0 0 2px #0003; }
.info header { display: flex; align-items: center; height: 29px; padding-left: 3px; }
.info header svg { width: 16px; height: 16px; }
.info h3 { flex: 1; margin: 0; padding-left: 12px; font-size: 14px; font-weight: 400; text-align: center; }
.info .close { width: 31px; height: 20px; align-self: flex-start; }
.info header .close svg { width: 9px; height: 9px; }
.info-box { border: 1px solid #d0d0d0; font-size: 10px; line-height: 13px; }
.info-body { display: flex; gap: 16px; padding: 11px 10px; background: #fff; }
.info-body > svg { width: 54px; height: 54px; }
.info p { margin: 0 0 13px; white-space: nowrap; }
.info p + p { margin: 0 0 3px; }
.info label { display: flex; align-items: center; gap: 4px; padding-left: 3px; font-size: 10px; font-weight: 400; line-height: 14px; }
.info input { width: 13px; height: 13px; margin: 0; appearance: none; border: 1px solid #777; background: #fff; }
.info-foot { display: flex; justify-content: flex-end; gap: 7px; height: 48px; padding: 15px 16px 0; border-top: 1px solid #ccc; background: #f6f7f9; }
.info-foot button { width: 78px; height: 21px; padding: 0; border: 1px solid #aaa; background: linear-gradient(#f1f1f1, #e4e4e4); font-size: 11px; }
.info-foot .focus { padding: 1px; border-color: #3b94f5; }
.focus span { display: block; height: 17px; border: 1px dotted #000; line-height: 15px; }

/* Local taskbar */
.host-bar { display: flex; gap: 4px; height: 40px; flex: none; padding-left: 17px; background: #939393; color: #fff; border-top: 1px solid #848a80; font-size: 11px; }
.host-bar .app { width: 58px; padding: 0; border: 0; background: none; }
.host-bar .app svg { width: 32px; height: 32px; }
.host-bar .open { border: 1px solid #bbb; background: #a5a5a5; }
.host-bar .current-app { border: 1px solid #e3eefa; background: linear-gradient(90deg, #bbb 49px, #cfe3f5 50px 51px, #999 51px 53px, #cfe3f5 53px 54px, #999 54px 56px); padding-right: 8px; }
.host-tray { display: flex; align-items: center; margin-left: auto; padding-right: 26px; }
.libra { display: flex; align-items: center; gap: 4px; margin-left: 7px; padding-bottom: 9px; }
.libra svg { width: 16px; height: 16px; }
.more { margin: 0 5px 20px 6px; font-size: 16px; line-height: 16px; }
.notice { width: 61px; height: 38px; padding: 0; border: 1px solid #777; border-color: #bbb #555 #555 #bbb; border-radius: 8px 0 0 0; background: linear-gradient(#a5a5a5, #8e8e8e); }
.notice svg { display: block; width: 30px; height: 30px; margin: auto; }
.host-tray .tray-up { margin: 0 14px 0 7px; }
.bt { width: 12px; height: 16px; margin-right: 19px; }
.host-tray time { line-height: 17px; }
```
